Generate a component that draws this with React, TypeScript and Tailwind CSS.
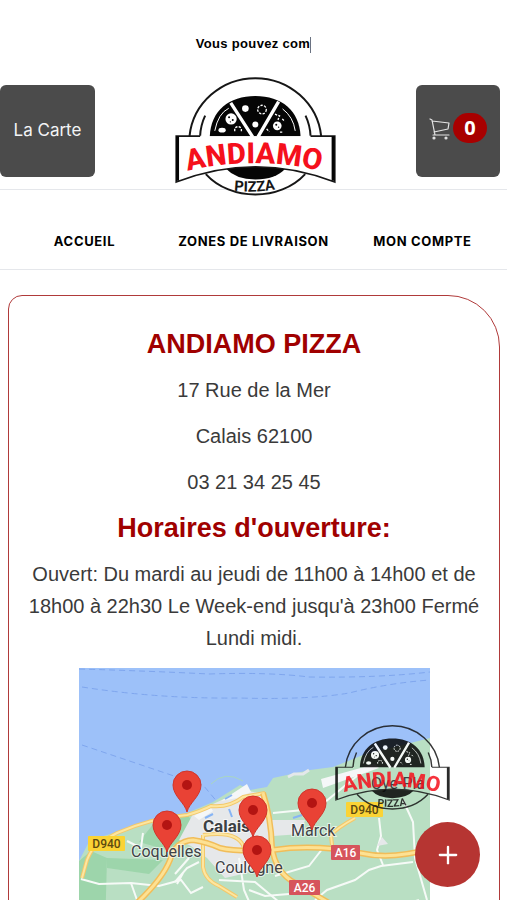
import React from 'react';
import { Plus } from 'lucide-react';

const Logo = ({ id, className, ribbon }: { id: string; className: string; ribbon: string }) => (
  <svg viewBox="43 34 483 358" className={className} role="img" aria-label="Andiamo Pizza">
    {/* Outer rings */}
    <g fill={ribbon} stroke="#161616" strokeWidth="6">
      <path d="M86 212 A199 194 0 0 1 482 212" />
      <path d="M135 326 C210 408 358 408 434 326" />
    </g>
    <path d="M133 150 Q119 180 118 211 M435 150 Q449 180 450 211" fill="none" stroke="#161616" strokeWidth="6" />

    {/* Half pizza and its slices */}
    <path d="M147 212 C150 135 205 91 284 91 C363 91 417 135 420 212 Z" fill="#050505" />
    <path d="M210 112 L276 214 M354 108 L292 214" stroke="#fff" strokeWidth="10" />
    <path d="M162 196 Q172 144 204 128 M366 130 Q398 154 404 196" fill="none" stroke="#fff" strokeWidth="3" />
    <g fill="#fff">
      <circle cx="211" cy="160" r="17" />
      <circle cx="254" cy="129" r="10" />
      <circle cx="284" cy="177" r="9" />
      <circle cx="350" cy="181" r="13" />
      <ellipse cx="184" cy="194" rx="11" ry="7" />
    </g>
    <g fill="#050505">
      <circle cx="205" cy="155" r="3" />
      <circle cx="216" cy="163" r="3" />
      <circle cx="209" cy="169" r="2" />
      <circle cx="347" cy="178" r="3" />
      <circle cx="354" cy="185" r="2" />
    </g>
    <g fill="none" stroke="#fff" strokeWidth="4" strokeDasharray="7 4">
      <circle cx="304" cy="132" r="13" />
      <path d="M222 197 v-9 q10 -9 20 0 v10" />
      <path d="M343 146 l14 5 l-5 12 M365 160 l8 8 M318 190 l8 9 M358 200 h10" />
    </g>

    {/* Sauce under the banner */}
    <path d="M196 310 Q284 296 374 310 Q345 342 284 342 Q225 342 196 310 Z" fill="#050505" />

    {/* Banner */}
    <path d="M46 212 H523 V350 Q284 258 46 350 Z" fill={ribbon} />
    <path d="M118 212 H46 V350 Q284 258 523 350 V212 H450" fill="none" stroke="#161616" strokeWidth="5" />
    <path d="M50 212 V346 M518 212 V346" stroke="#050505" strokeWidth="9" />

    <path id={`${id}-top`} d="M60 322 Q278 264 500 322" fill="none" />
    <text fontFamily="Roboto, sans-serif" fontSize="88" fontWeight="800" fill="#f5101c" textAnchor="middle">
      <textPath href={`#${id}-top`} startOffset="50%">ANDIAMO</textPath>
    </text>
    <path id={`${id}-bottom`} d="M190 372 Q282 388 374 366" fill="none" />
    <text fontFamily="Roboto, sans-serif" fontSize="44" fontWeight="700" fill="#161616" textAnchor="middle">
      <textPath href={`#${id}-bottom`} startOffset="50%">PIZZA</textPath>
    </text>
  </svg>
);

const pins = [
  [108, 144],
  [88, 184],
  [174, 169],
  [178, 209],
  [233, 162],
];

const shields = [
  { label: 'D940', x: 9, y: 168, w: 37, fill: '#fbd335', color: '#5d4a10' },
  { label: 'D940', x: 267, y: 134, w: 37, fill: '#fbd335', color: '#5d4a10' },
  { label: 'A16', x: 252, y: 177, w: 29, fill: '#d6545c', color: '#ffffff' },
  { label: 'A26', x: 210, y: 212, w: 31, fill: '#d6545c', color: '#ffffff' },
];

const roads =
  'M59 234 Q84 210 91 192 Q96 173 114 172 Q128 174 141 180 Q158 184 194 182 Q236 176 281 185 Q312 192 351 181 M184 125 Q192 150 193 179 Q196 204 216 215 L252 236 Q290 250 310 264';
const smallRoads =
  'M3 210 L8 192 Q12 182 18 176 L38 165 Q72 150 108 147 Q122 143 132 138 Q150 140 164 129 L186 125 M124 167 V199 Q126 212 140 218 L158 229 M124 167 Q160 162 165 180 M253 177 L252 167 Q258 160 276 150';

const DeliveryMap = () => (
  <svg viewBox="0 0 351 264" className="w-full max-w-[351px]" role="img" aria-label="Carte des zones de livraison">
    <rect width="351" height="264" fill="#9dc1f9" />
    <g fill="none" stroke="#7fa6ee" strokeWidth="1" strokeDasharray="6 4">
      <path d="M0 1 Q70 3 130 6 Q190 4 230 9 Q300 10 351 4" />
      <path d="M3 19 Q80 31 160 30 Q230 32 270 25 Q310 15 351 12" />
      <path d="M3 77 L98 109 L124 117 L140 136" />
    </g>

    {/* Land */}
    <path
      d="M0 193 L11 172 L38 164 L71 154 L108 145 L134 134 L161 117 L171 122 L188 119 L194 110 L231 102 L254 99 L284 87 L351 70 V264 H0 Z"
      fill="#b9dfc3"
    />
    <path d="M0 193 L12 183 L28 190 L26 264 H0 Z M75 155 L108 146 L118 160 L88 182 L60 174 Z M28 190 L84 192 L70 206 L28 200 Z" fill="#9dd5ab" />
    <path d="M114 146 L134 136 L165 122 L184 126 L192 152 H226 L222 166 L194 168 L190 182 L168 205 L146 210 L128 190 L112 178 L100 172 Z" fill="#e6e8ea" />
    <path d="M142 133 L168 116 L172 124 L158 130 M115 148 L131 138 L134 143 L120 152 Z M242 111 L296 96 L300 100 L244 120 Z" fill="#f5f7f8" />
    <path d="M132 116 Q146 102 164 113" fill="none" stroke="#a9d6c2" />
    <path d="M209 109 L215 106 H224 L230 102" fill="none" stroke="#e4e8ea" strokeWidth="3" />
    <path d="M146 131 l7 -4 M150 141 l3 8 M126 150 l8 -4 M214 150 l9 -3" stroke="#86b4f5" strokeWidth="2" />

    {/* Streets */}
    <g fill="none" stroke="#f6faf7" strokeWidth="2">
      <path d="M2 211 L20 216 L52 215 L80 218 L102 212 L112 225 L124 219" />
      <path d="M48 173 L62 180 L64 165 M52 215 L58 232 M96 214 L108 200 L120 194 M104 205 L98 216 M110 190 L96 206" />
      <path d="M194 145 L224 142 L246 134 L284 103 M160 190 L165 222 L172 238 M140 212 L176 214 L200 234" />
      <path d="M196 208 L230 198 L244 180 M236 232 L248 222 L276 212 L290 202 L302 198 L334 194" />
      <path d="M300 150 L302 168 L298 182 L304 197 M324 132 L334 154 L336 190 L348 232 M170 222 L186 228 L210 226" />
      <path d="M0 248 L60 240 L110 252 L180 244 M282 250 L340 232" />
    </g>
    <path d="M298 178 l5 -9 l6 7 Z" fill="#e6e8ea" />
    <g fill="none" strokeLinejoin="round">
      <path d={smallRoads} stroke="#f3c86a" strokeWidth="4" />
      <path d={smallRoads} stroke="#fde6a0" strokeWidth="2" />
      <path d={roads} stroke="#f1bd59" strokeWidth="6" />
      <path d={roads} stroke="#fde193" strokeWidth="3" />
    </g>

    <g fontFamily="Roboto, sans-serif" fontSize="12" fontWeight="500" textAnchor="middle">
      {shields.map((s) => (
        <g key={`${s.label}-${s.x}`}>
          <rect x={s.x} y={s.y} width={s.w} height="15" rx="1" fill={s.fill} />
          <text x={s.x + s.w / 2} y={s.y + 12} fill={s.color}>{s.label}</text>
        </g>
      ))}
    </g>

    <g fontFamily="Roboto, sans-serif" fontSize="16" fontWeight="400" fill="#3f4246" stroke="#fff" strokeWidth="2" strokeOpacity="0.6" paintOrder="stroke">
      <text x="124" y="164" fontSize="17" fontWeight="700" fill="#3c4043">Calais</text>
      <text x="52" y="189">Coquelles</text>
      <text x="136" y="205">Coulogne</text>
      <text x="212" y="168">Marck</text>
      <text x="292" y="121" stroke="none">Oye-Pla</text>
    </g>

    {pins.map(([x, y]) => (
      <g key={`${x}-${y}`} transform={`translate(${x} ${y})`}>
        <path d="M0 0 C-2 -9 -14 -16 -14 -27 A14 14 0 0 1 14 -27 C14 -16 2 -9 0 0 Z" fill="#e94235" stroke="#d0352b" strokeWidth="1" />
        <circle cy="-27" r="5" fill="#b31412" />
      </g>
    ))}
  </svg>
);

const CartIcon = () => (
  <svg viewBox="0 0 22 24" className="h-6 w-[22px]" fill="none" stroke="#e5e5e5" strokeWidth="1.2" strokeLinecap="round" strokeLinejoin="round">
    <path d="M1 3 L3 4 L6 19 M3 5 L20 7 L19 13 L5 16 M4 19 H20" />
    <circle cx="5" cy="22" r="1" fill="#e5e5e5" />
    <circle cx="17" cy="22" r="1" fill="#e5e5e5" />
  </svg>
);

const links = ['Accueil', 'Zones de livraison', 'Mon compte'];

const App = () => {
  return (
    <div className="h-dvh overflow-x-hidden overflow-y-auto bg-white font-['Liberation_Sans',sans-serif] text-[#3a3a3a]">
      <header className="border-b border-gray-200">
        <p className="h-[77px] pt-8 text-center text-[13px] leading-6 font-bold tracking-wide text-black">
          Vous pouvez com<span className="inline-block h-4 border-r border-gray-500 align-middle" />
        </p>
        <div className="flex h-28 items-start justify-between pr-[7px] font-[Inter,sans-serif]">
          <button type="button" className="mt-2 h-[92px] w-[95px] rounded-md bg-[#4b4b4b] text-[17px] text-gray-100">
            La Carte
          </button>
          <a href="#accueil" className="shrink-0">
            <Logo id="header" className="h-[119px] w-[161px]" ribbon="#ffffff" />
          </a>
          <button
            type="button"
            aria-label="Panier"
            className="mt-2 flex h-[92px] w-[84px] items-center justify-center rounded-md bg-[#4b4b4b] pb-1.5"
          >
            <CartIcon />
            <span className="ml-0.5 flex h-[30px] w-[34px] items-center justify-center rounded-full bg-[#a80000] font-['Open_Sans',sans-serif] text-xl font-bold text-white">
              0
            </span>
          </button>
        </div>
      </header>

      <nav className="grid h-20 grid-cols-3 items-center border-b border-gray-200 pt-6 text-center font-[Inter,sans-serif] text-[13px] font-bold tracking-wider text-black uppercase">
        {links.map((link) => (
          <a key={link} href="#accueil" className="whitespace-nowrap">
            {link}
          </a>
        ))}
      </nav>

      <main className="pt-[25px] pr-[7px] pl-2">
        <section className="flex flex-col items-center rounded-[14px] rounded-tr-[52px] border border-[#b03a3a] px-4 pt-[30px] pb-8 text-center text-xl leading-8">
          <h2 className="text-[27px] leading-9 font-bold text-[#a00000]">ANDIAMO PIZZA</h2>
          <p className="mt-3">17 Rue de la Mer</p>
          <p className="mt-3.5">Calais 62100</p>
          <p className="mt-3.5">03 21 34 25 45</p>
          <h2 className="mt-3 text-[27px] leading-9 font-bold text-[#a00000]">Horaires d'ouverture:</h2>
          <p className="mt-3 mb-3.5">
            Ouvert: Du mardi au jeudi de 11h00 à 14h00 et de 18h00 à 22h30 Le Week-end jusqu'à 23h00 Fermé Lundi midi.
          </p>
          <DeliveryMap />
        </section>
      </main>

      {/* Floating logo and contact button */}
      <Logo id="floating" className="fixed right-[57px] bottom-[90px] h-[85px] w-[115px] opacity-85" ribbon="none" />
      <button
        type="button"
        aria-label="Ouvrir le menu"
        className="fixed right-[27px] bottom-[13px] flex size-[65px] items-center justify-center rounded-full bg-[#b63532] text-white"
      >
        <Plus size={28} strokeWidth={2} />
      </button>
    </div>
  );
};

export default App;
